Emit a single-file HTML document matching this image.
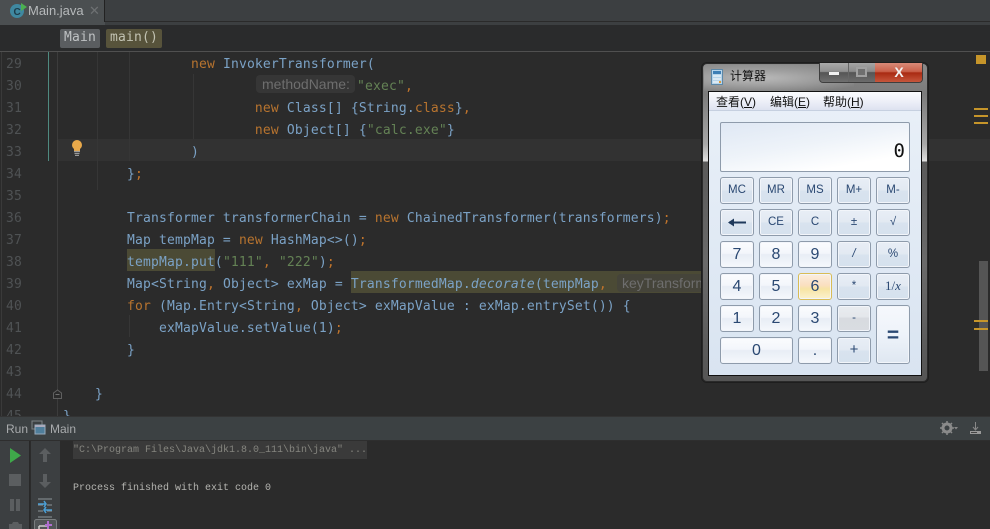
<!DOCTYPE html>
<html><head><meta charset="utf-8">
<style>
*{box-sizing:border-box}
html,body{margin:0;padding:0;width:990px;height:529px;overflow:hidden;background:#2b2b2b}
.a{position:absolute}
#root{position:relative;width:990px;height:529px;overflow:hidden;background:#2b2b2b}
.l{position:absolute;left:63px;height:22px;font:13px/22px "DejaVu Sans Mono",monospace;letter-spacing:.17px;color:#7ba2c6;white-space:pre}
.n{position:absolute;left:6px;font:13px/22px "DejaVu Sans Mono",monospace;letter-spacing:.17px;color:#4f5254;white-space:pre}
.k{color:#b8742f}.s{color:#648255}.o{color:#c0742c}
.h{position:absolute;font:14px/18px "Liberation Sans",sans-serif;color:#6e6e6e;background:#363636;border-radius:4px;padding:0 6px;white-space:pre}
.g{position:absolute;width:1px;background:#363636}
.y{position:absolute;background:#c6952a;left:974px;width:14px;height:2px}
.b{position:absolute;width:34px;height:27px;border:1px solid #8e9bab;border-radius:3px;text-align:center;font:11.500px/24px "Liberation Sans",sans-serif;color:#2a4872;background:linear-gradient(#e8eef6 0,#e2e9f2 50%,#d8e3ef 51%,#d6e1ed 100%);box-shadow:inset 0 0 0 1px #f2f5fa}
.w{font-size:16px;line-height:26px;background:linear-gradient(#fbfcfe 0,#f3f6fb 45%,#e8edf5 50%,#f5f8fc 100%)}
.c{position:absolute;font:10px/16px "Liberation Mono",monospace;color:#b4b4b0;white-space:pre}
</style></head>
<body><div id="root">

<!-- tab bar -->
<div class="a" style="left:0;top:0;width:990px;height:25px;background:#3c3f41"></div>
<div class="a" style="left:0;top:0;width:105px;height:22px;background:#4b4f51;border-right:1px solid #222"></div>
<div class="a" style="left:105px;top:21px;width:885px;height:1px;background:#2a2a2a"></div>
<div class="a" style="left:0;top:22px;width:105px;height:3px;background:#4b4f51"></div>
<svg class="a" style="left:9px;top:2px" width="18" height="16"><circle cx="8" cy="9" r="7" fill="#3f88a0"/><text x="4.500" y="13" font-family="Liberation Sans" font-size="10" font-weight="bold" fill="#1d3b48">C</text><path d="M12 1l6 4-6 4z" fill="#4caf50"/></svg>
<div class="a" style="left:28px;top:2px;font:13px/18px 'Liberation Sans',sans-serif;color:#b6b9bb">Main.java</div>
<div class="a" style="left:89px;top:2px;font:13px/18px 'Liberation Sans',sans-serif;color:#6e7173">✕</div>

<!-- breadcrumb -->
<div class="a" style="left:0;top:25px;width:990px;height:27px;background:#2a2b2c;border-bottom:1px solid #505050"></div>
<div class="a" style="left:60px;top:29px;width:40px;height:19px;background:#5a5d60;border-radius:2px;font:13px/18px 'DejaVu Sans Mono',monospace;letter-spacing:.17px;color:#bfc2c4;padding-left:4px">Main</div>
<div class="a" style="left:106px;top:29px;width:56px;height:19px;background:#57533b;border-radius:2px;font:13px/18px 'DejaVu Sans Mono',monospace;letter-spacing:.17px;color:#c2c2b2;padding-left:4px">main()</div>

<!-- gutter -->
<div class="a" style="left:1px;top:52px;width:1px;height:364px;background:#3a3a3a"></div>
<div class="a" style="left:57px;top:52px;width:1px;height:364px;background:#3c3c3c"></div>
<div class="a" style="left:48px;top:52px;width:1px;height:109px;background:#4f8a80"></div>
<div class="a" style="left:58px;top:139px;width:932px;height:22px;background:#323232"></div>
<div class="g" style="left:97px;top:52px;height:138px"></div>
<div class="g" style="left:129px;top:52px;height:109px"></div>
<div class="g" style="left:193px;top:74px;height:65px"></div>
<div class="g" style="left:129px;top:315px;height:22px"></div>

<!-- bulb -->
<svg class="a" style="left:70px;top:140px" width="14" height="16"><circle cx="7" cy="5" r="5" fill="#e9a94a"/><path d="M4 8h6v3H4z" fill="#e9a94a"/><path d="M4 11.500h6M4.500 13.500h5M5 15.500h4" stroke="#9a9a9a" stroke-width="1.300"/></svg>
<!-- fold -->
<svg class="a" style="left:52px;top:389px" width="11" height="11"><path d="M1.500 9.500V4l4-3 4 3v5.500z" fill="#2b2b2b" stroke="#606060"/><path d="M3.500 5.500h4" stroke="#707070"/></svg>

<!-- numbers -->
<div class="n" style="top:54px">29</div>
<div class="n" style="top:76px">30</div>
<div class="n" style="top:98px">31</div>
<div class="n" style="top:120px">32</div>
<div class="n" style="top:142px">33</div>
<div class="n" style="top:164px">34</div>
<div class="n" style="top:186px">35</div>
<div class="n" style="top:208px">36</div>
<div class="n" style="top:230px">37</div>
<div class="n" style="top:252px">38</div>
<div class="n" style="top:274px">39</div>
<div class="n" style="top:296px">40</div>
<div class="n" style="top:318px">41</div>
<div class="n" style="top:340px">42</div>
<div class="n" style="top:362px">43</div>
<div class="n" style="top:384px">44</div>
<div class="n" style="top:406px">45</div>

<!-- highlights -->
<div class="a" style="left:127px;top:249px;width:88px;height:22px;background:#4b4a35"></div>
<div class="a" style="left:351px;top:271px;width:352px;height:22px;background:#4b4a35"></div>

<!-- code -->
<div class="l" style="top:54px">                <span class="k">new</span> InvokerTransformer(</div>
<div class="h" style="left:256px;top:75px;width:99px">methodName:</div>
<div class="l" style="top:76px;left:357px"><span class="s">"exec"</span><span class="o">,</span></div>
<div class="l" style="top:98px">                        <span class="k">new</span> Class[] {String.<span class="k">class</span>}<span class="o">,</span></div>
<div class="l" style="top:120px">                        <span class="k">new</span> Object[] {<span class="s">"calc.exe"</span>}</div>
<div class="l" style="top:142px">                )</div>
<div class="l" style="top:164px">        }<span class="o">;</span></div>
<div class="l" style="top:208px">        Transformer transformerChain = <span class="k">new</span> ChainedTransformer(transformers)<span class="o">;</span></div>
<div class="l" style="top:230px">        Map tempMap = <span class="k">new</span> HashMap&lt;&gt;()<span class="o">;</span></div>
<div class="l" style="top:252px">        tempMap.put(<span class="s">"111"</span><span class="o">,</span> <span class="s">"222"</span>)<span class="o">;</span></div>
<div class="l" style="top:274px">        Map&lt;String<span class="o">,</span> Object&gt; exMap = TransformedMap.<i>decorate</i>(tempMap<span class="o">,</span></div>
<div class="h" style="left:617px;top:274px;width:86px;overflow:hidden;border-radius:4px 0 0 4px;background:#45443a;padding-left:5px">keyTransformer:</div>
<div class="l" style="top:296px">        <span class="k">for</span> (Map.Entry&lt;String<span class="o">,</span> Object&gt; exMapValue : exMap.entrySet()) {</div>
<div class="l" style="top:318px">            exMapValue.setValue(1)<span class="o">;</span></div>
<div class="l" style="top:340px">        }</div>
<div class="l" style="top:384px">    }</div>
<div class="l" style="top:406px">}</div>

<!-- right stripe -->
<div class="a" style="left:979px;top:261px;width:9px;height:110px;background:#555"></div>
<div class="a" style="left:976px;top:55px;width:10px;height:9px;background:#c6952a"></div>
<div class="y" style="top:108px"></div><div class="y" style="top:115px"></div><div class="y" style="top:122px"></div>
<div class="y" style="top:320px"></div><div class="y" style="top:328px"></div>

<!-- run panel -->
<div class="a" style="left:0;top:416px;width:990px;height:25px;background:#3c4143;border-top:1px solid #333;border-bottom:1px solid #2e2e2e"></div>
<div class="a" style="left:6px;top:420px;font:12px/18px 'Liberation Sans',sans-serif;color:#a8abad">Run</div>
<svg class="a" style="left:31px;top:420px" width="15" height="15"><rect x="1" y="1" width="10" height="8" fill="none" stroke="#7d8386"/><rect x="4" y="5" width="10" height="9" fill="#4f7e9b" stroke="#9ab"/><rect x="4" y="5" width="10" height="2" fill="#aab"/></svg>
<div class="a" style="left:50px;top:420px;font:12px/18px 'Liberation Sans',sans-serif;color:#a8abad">Main</div>
<svg class="a" style="left:940px;top:421px" width="18" height="14"><circle cx="7" cy="7" r="4" fill="none" stroke="#8a8a8a" stroke-width="3"/><path d="M7 0v3M7 11v3M0 7h3M11 7h3M2 2l2 2M10 10l2 2M2 12l2-2M10 4l2-2" stroke="#8a8a8a" stroke-width="1.500"/><path d="M14 6h4l-2 2.500z" fill="#888"/></svg>
<svg class="a" style="left:969px;top:421px" width="13" height="14"><path d="M6.500 1v7M4 6l2.500 3L9 6" stroke="#888" fill="none"/><rect x="1" y="10" width="11" height="3" fill="#999"/><rect x="2" y="11" width="6" height="1" fill="#444"/></svg>

<div class="a" style="left:0;top:441px;width:30px;height:88px;background:#3c3f41;border-right:1px solid #282828"></div>
<div class="a" style="left:31px;top:441px;width:29px;height:88px;background:#3c3f41"></div>
<svg class="a" style="left:0;top:441px" width="60" height="88">
<path d="M10 7l11 7.500L10 22z" fill="#3fa84a"/>
<rect x="9" y="33" width="12" height="12" fill="#5b5e60"/>
<rect x="10" y="58" width="4" height="12" fill="#5b5e60"/><rect x="16" y="58" width="4" height="12" fill="#5b5e60"/>
<path d="M9 88v-5h3l1-2h5l1 2h3v5z" fill="#5b5e60"/>
<path d="M45 7l-6 6h4v8h4v-8h4z" fill="#5b5e60"/>
<path d="M45 47l-6-6h4v-8h4v8h4z" fill="#5b5e60"/>
<path d="M38 58h14M38 76h14M38 64h5M47 64h5M38 70h5M47 70h5" stroke="#8d9499" stroke-width="1"/>
<path d="M38 63h8M44 60l2 3-2 3M52 69h-8M46 66l-2 3 2 3" stroke="#4a9fd6" stroke-width="1.500" fill="none"/>
<rect x="34.500" y="78.500" width="22" height="12" rx="2" fill="#515557" stroke="#7a7e80"/>
<path d="M39 85h9M39 85v3" stroke="#ccc" stroke-width="1.500" fill="none"/>
<path d="M48 80v8M45 84h7" stroke="#b06fd0" stroke-width="2"/>
</svg>

<!-- console -->
<div class="a" style="left:73px;top:441px;width:294px;height:18px;background:#3a3a3a"></div>
<div class="c" style="left:73px;top:443px;color:#85857f">"C:\Program Files\Java\jdk1.8.0_111\bin\java" ...</div>
<div class="c" style="left:73px;top:481px">Process finished with exit code 0</div>

<!-- calculator window -->
<div class="a" style="left:702px;top:63px;width:226px;height:319px;border-radius:5px;border:1px solid #2a2a2a;background:linear-gradient(#8a8a8a 0,#7b7b7b 30px,#a8a8a8 80px,#e0e0e0 97px,#5a5a5a 98px,#6a6a6a 200px,#555 100%);box-shadow:0 0 0 1px #1e1e1e"></div>
<div class="a" style="left:704px;top:65px;width:150px;height:26px;background:radial-gradient(ellipse at 35% 50%,#bbb 0,#a0a0a0 40%,rgba(130,130,130,0) 85%)"></div>
<svg class="a" style="left:711px;top:69px" width="12" height="16"><rect x=".5" y=".5" width="11" height="15" fill="#b6d4ea" stroke="#5d88a8"/><rect x="2" y="2" width="8" height="3" fill="#3e7fb5"/><path d="M2 7h8M2 10h8M2 13h8" stroke="#e7f0f6" stroke-width="1.500"/><rect x="8" y="12" width="2" height="2" fill="#e09a36"/></svg>
<div class="a" style="left:730px;top:67px;font:12px/18px 'Liberation Sans','Noto Sans CJK SC',sans-serif;color:#111">计算器</div>
<!-- window buttons -->
<div class="a" style="left:819px;top:63px;width:104px;height:20px;border:1px solid #3e3e3e;border-top:0;border-radius:0 0 4px 4px;overflow:hidden;background:#666"></div>
<div class="a" style="left:820px;top:63px;width:28px;height:19px;background:linear-gradient(#aaa 0,#8f8f8f 45%,#555 50%,#6f6f6f 100%);border-radius:0 0 0 3px"></div>
<div class="a" style="left:829px;top:72px;width:10px;height:3px;background:#f0f0f0"></div>
<div class="a" style="left:849px;top:63px;width:26px;height:19px;background:linear-gradient(#a5a5a5 0,#8a8a8a 45%,#555 50%,#6c6c6c 100%)"></div>
<div class="a" style="left:856px;top:67px;width:11px;height:10px;border:2px solid #a0a0a0;background:#6f6f6f"></div>
<div class="a" style="left:875px;top:63px;width:47px;height:19px;background:linear-gradient(#d98a78 0,#c9604a 45%,#a92a12 52%,#c6563c 100%);border-radius:0 0 3px 0"></div>
<div class="a" style="left:892px;top:63px;width:14px;height:19px;font:bold 14px/19px 'Liberation Sans',sans-serif;color:#f2f2f2;text-align:center">X</div>

<!-- client -->
<div class="a" style="left:708px;top:91px;width:214px;height:285px;border:1px solid #111;background:linear-gradient(#e9f0f8,#d9e4f1 100%)"></div>
<div class="a" style="left:709px;top:92px;width:212px;height:19px;background:linear-gradient(#fbfcfe 0,#eef0f8 50%,#dde2f0 100%);border-bottom:1px solid #c6d0e0"></div>
<div class="a" style="left:716px;top:93px;font:12px/18px 'Liberation Sans','Noto Sans CJK SC',sans-serif;color:#111">查看(<u>V</u>)</div>
<div class="a" style="left:770px;top:93px;font:12px/18px 'Liberation Sans','Noto Sans CJK SC',sans-serif;color:#111">编辑(<u>E</u>)</div>
<div class="a" style="left:823px;top:93px;font:12px/18px 'Liberation Sans','Noto Sans CJK SC',sans-serif;color:#111">帮助(<u>H</u>)</div>
<div class="a" style="left:720px;top:122px;width:190px;height:50px;border:1px solid #8e9bab;border-radius:2px;background:linear-gradient(170deg,#dfe8f4 0,#eef3f9 45%,#fff 80%);text-align:right;padding-right:4px;font:19px/57px 'DejaVu Sans Mono',monospace;color:#111">0</div>

<div class="b" style="left:720px;top:177px">MC</div>
<div class="b" style="left:759px;top:177px">MR</div>
<div class="b" style="left:798px;top:177px">MS</div>
<div class="b" style="left:837px;top:177px">M+</div>
<div class="b" style="left:876px;top:177px">M-</div>

<div class="b" style="left:720px;top:209px"><svg width="18" height="9" style="position:absolute;left:7px;top:8px"><path d="M1 4.500h17" stroke="#1e395b" stroke-width="2"/><path d="M0 4.500L6 .5v8z" fill="#1e395b"/></svg></div>
<div class="b" style="left:759px;top:209px">CE</div>
<div class="b" style="left:798px;top:209px">C</div>
<div class="b" style="left:837px;top:209px">±</div>
<div class="b" style="left:876px;top:209px">√</div>

<div class="b w" style="left:720px;top:241px">7</div>
<div class="b w" style="left:759px;top:241px">8</div>
<div class="b w" style="left:798px;top:241px">9</div>
<div class="b" style="left:837px;top:241px"><i>/</i></div>
<div class="b" style="left:876px;top:241px">%</div>

<div class="b w" style="left:720px;top:273px">4</div>
<div class="b w" style="left:759px;top:273px">5</div>
<div class="b w" style="left:798px;top:273px;border-color:#d9bc55;background:linear-gradient(#fbeede 0,#fadfc0 45%,#f7e4a4 60%,#fbf2cf 100%)">6</div>
<div class="b" style="left:837px;top:273px">*</div>
<div class="b" style="left:876px;top:273px;font:13px/24px 'Liberation Serif',serif">1/<i>x</i></div>

<div class="b w" style="left:720px;top:305px">1</div>
<div class="b w" style="left:759px;top:305px">2</div>
<div class="b w" style="left:798px;top:305px">3</div>
<div class="b" style="left:837px;top:305px;background:linear-gradient(#e9ecf0 0,#e4e7eb 45%,#d8dbe0 46%,#d9dce1 100%)">-</div>
<div class="b w" style="left:876px;top:305px;height:59px;font:bold 21px/59px 'Liberation Sans',sans-serif;background:linear-gradient(#f6f8fc 0,#eef3fa 50%,#dfe7f1 100%)">=</div>

<div class="b w" style="left:720px;top:337px;width:73px">0</div>
<div class="b w" style="left:798px;top:337px">.</div>
<div class="b" style="left:837px;top:337px;font-size:15px">+</div>

</div></body></html>
